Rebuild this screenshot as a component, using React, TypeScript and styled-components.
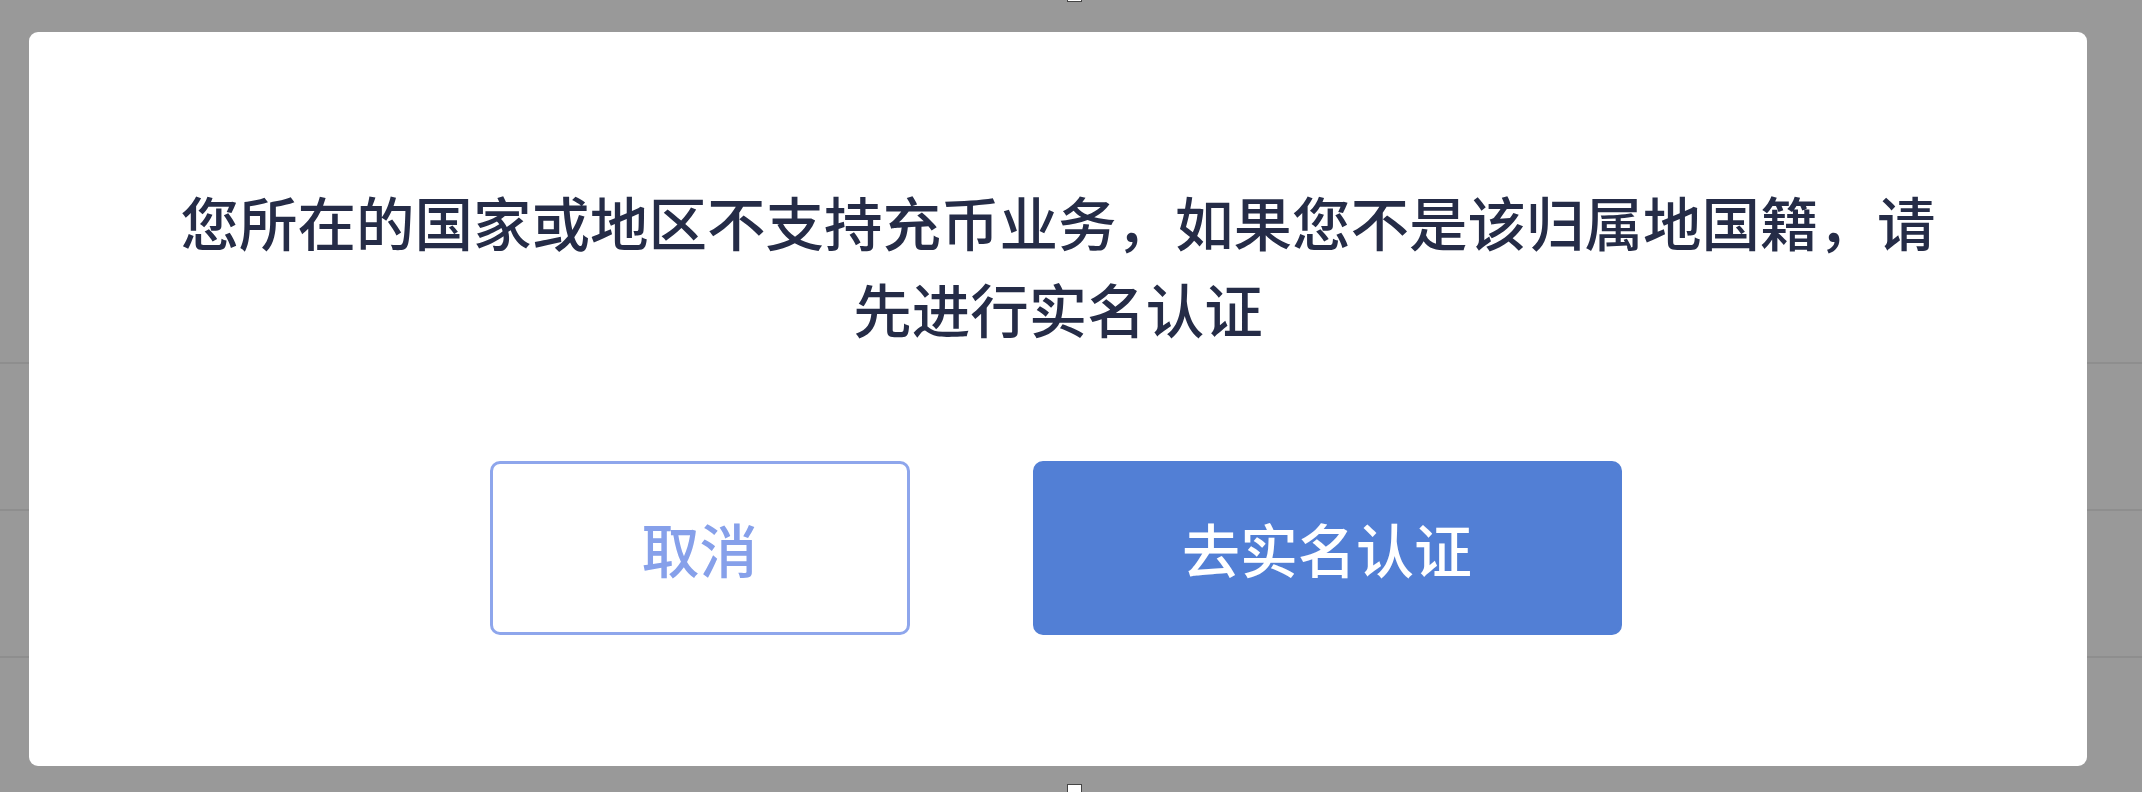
import React from "react";
import styled, { createGlobalStyle } from "styled-components";

const GlobalStyle = createGlobalStyle`
  html, body {
    margin: 0;
    padding: 0;
    width: 100%;
    height: 100%;
    overflow: hidden;
    background: #999999;
    font-family: "Noto Sans CJK SC", "Noto Sans", sans-serif;
  }
  * { box-sizing: border-box; }
`;

const Page = styled.div`
  width: 2142px;
  height: 792px;
  display: flex;
  flex-direction: column;
  padding-top: 217px;
  background: #999999;
`;

const BgRow = styled.div`
  height: 147px;
  border-bottom: 2px solid #8e8e8e;
`;

const Overlay = styled.div`
  position: fixed;
  inset: 0;
  display: flex;
  padding: 32px 55px 26px 29px;
`;

const Dialog = styled.div`
  flex: 1;
  background: #ffffff;
  border-radius: 9px;
  display: flex;
  flex-direction: column;
  align-items: center;
  padding: 145px 140px 132px;
`;

const Message = styled.p`
  margin: 0;
  font-size: 58.5px;
  line-height: 87px;
  color: #252c47;
  text-align: center;
  font-weight: 500;
`;

const Actions = styled.div`
  margin-top: 110px;
  margin-right: 5px;
  display: flex;
  gap: 123px;
`;

const Button = styled.button<{ $primary?: boolean }>`
  height: 174px;
  width: ${(p) => (p.$primary ? "589px" : "420px")};
  border-radius: 10px;
  font-family: "Noto Sans CJK SC", "Noto Sans", sans-serif;
  font-size: 58px;
  font-weight: 500;
  line-height: 1;
  display: flex;
  align-items: center;
  justify-content: center;
  cursor: pointer;
  border: 3px solid ${(p) => (p.$primary ? "#527fd5" : "#8ea6ec")};
  background: ${(p) => (p.$primary ? "#527fd5" : "#ffffff")};
  color: ${(p) => (p.$primary ? "#ffffff" : "#86a0ea")};
`;

const Handle = styled.div<{ $bottom?: boolean }>`
  position: fixed;
  left: 1067px;
  width: 15px;
  height: 10px;
  background: #ffffff;
  border: 1px solid #444;
  ${(p) => (p.$bottom ? "top: 784px;" : "top: -8px;")}
`;

export default function App() {
  return (
    <>
      <GlobalStyle />
      <Page>
        <BgRow />
        <BgRow />
        <BgRow />
      </Page>
      <Overlay>
        <Dialog>
          <Message>
            您所在的国家或地区不支持充币业务，如果您不是该归属地国籍，请先进行实名认证
          </Message>
          <Actions>
            <Button>取消</Button>
            <Button $primary>去实名认证</Button>
          </Actions>
        </Dialog>
      </Overlay>
      <Handle />
      <Handle $bottom />
    </>
  );
}
